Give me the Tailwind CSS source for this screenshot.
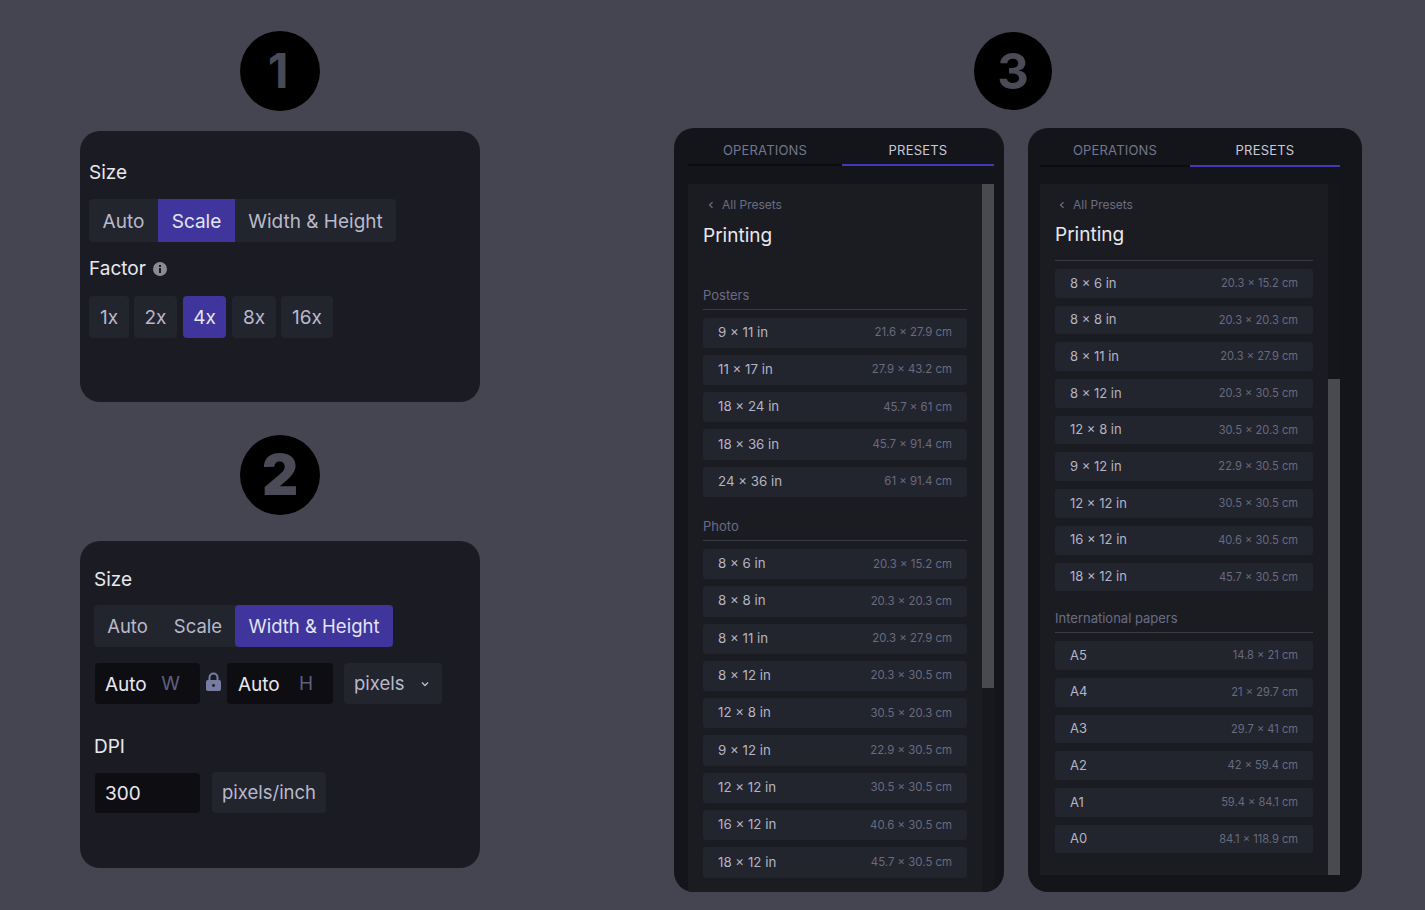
<!DOCTYPE html>
<html lang="en">
<head>
    <meta charset="UTF-8">
    <meta name="viewport" content="width=device-width, initial-scale=1.0">
    <title>Size options</title>
    <script src="https://cdn.jsdelivr.net/npm/@tailwindcss/browser@4"></script>
</head>
<body class="bg-[#444551] h-[910px] overflow-hidden flex font-['Inter',sans-serif]">
    <!-- Left column -->
    <div class="ml-[80px] w-[400px] pt-[31px]">
        <div class="w-[80px] h-[80px] mx-auto rounded-full bg-black flex items-center justify-center pr-[4px] text-[#4a4b57] text-[48px] font-bold leading-none">1</div>

        <!-- Panel 1 -->
        <div class="mt-[20px] h-[271px] rounded-[20px] bg-[#1b1c23] pl-[9px] pt-[30px]">
            <div class="text-[19px] leading-[24px] text-[#e8e8ee]">Size</div>
            <div class="mt-[14px] flex w-fit h-[43px] rounded-[4px] bg-[#22242e] text-[19px] text-[#b9b9cb]">
                <div class="w-[69px] pt-[4px] flex items-center justify-center">Auto</div>
                <div class="w-[77px] pt-[4px] flex items-center justify-center bg-[#3f359c] text-[#e4e4f2]">Scale</div>
                <div class="w-[161px] pt-[4px] flex items-center justify-center">Width &amp; Height</div>
            </div>
            <div class="mt-[15px] flex items-center gap-[7px] text-[19px] leading-[24px] text-[#e8e8ee]">
                Factor
                <svg class="w-[14px] h-[14px]" viewBox="0 0 14 14"><circle cx="7" cy="7" r="7" fill="#8b8b93"/><rect x="6" y="6" width="2" height="5" fill="#1b1c23"/><rect x="6" y="3" width="2" height="2" fill="#1b1c23"/></svg>
            </div>
            <div class="mt-[15px] flex text-[19px] text-[#b9b9cb]">
                <div class="w-[40px] h-[42px] pt-[2px] rounded-[4px] bg-[#22242e] flex items-center justify-center">1x</div>
                <div class="ml-[5px] w-[43px] h-[42px] pt-[2px] rounded-[4px] bg-[#22242e] flex items-center justify-center">2x</div>
                <div class="ml-[6px] w-[43px] h-[42px] pt-[2px] rounded-[4px] bg-[#3f359c] text-[#e4e4f2] flex items-center justify-center">4x</div>
                <div class="ml-[6px] w-[44px] h-[42px] pt-[2px] rounded-[4px] bg-[#22242e] flex items-center justify-center">8x</div>
                <div class="ml-[5px] w-[52px] h-[42px] pt-[2px] rounded-[4px] bg-[#22242e] flex items-center justify-center">16x</div>
            </div>
        </div>

        <div class="mt-[33px] w-[80px] h-[80px] mx-auto rounded-full bg-black flex items-center justify-center text-[#4a4b57] text-[56px] font-black leading-none">2</div>

        <!-- Panel 2 -->
        <div class="mt-[26px] h-[327px] rounded-[20px] bg-[#1b1c23] pl-[14px] pt-[27px]">
            <div class="text-[19px] leading-[24px] text-[#e8e8ee]">Size</div>
            <div class="mt-[13px] flex w-fit h-[42px] rounded-[4px] bg-[#22242e] text-[18.5px] text-[#b9b9cb]">
                <div class="w-[67px] pt-[2px] flex items-center justify-center">Auto</div>
                <div class="w-[74px] pt-[2px] flex items-center justify-center">Scale</div>
                <div class="w-[158px] pt-[2px] flex items-center justify-center rounded-[4px] bg-[#3f359c] text-[#e4e4f2]">Width &amp; Height</div>
            </div>
            <div class="mt-[16px] flex items-center text-[19px]">
                <div class="ml-[1px] w-[105px] h-[41px] rounded-[4px] bg-[#0e0e12] pl-[10px] pr-[20px] pt-[3px] flex items-center justify-between text-[#e8e8ee]">Auto<span class="text-[#5c5f80] -mt-[2px]">W</span></div>
                <svg class="ml-[6px] w-[15px] h-[20px] -mt-[3px]" viewBox="0 0 15 20"><path d="M3.5 9V5.5a4 4 0 0 1 8 0V9" fill="none" stroke="#787ca3" stroke-width="2"/><rect x="0" y="8" width="15" height="11" rx="2" fill="#787ca3"/><circle cx="7.5" cy="13.5" r="1.4" fill="#1b1c23"/></svg>
                <div class="ml-[6px] w-[106px] h-[41px] rounded-[4px] bg-[#0e0e12] pl-[11px] pr-[20px] pt-[3px] flex items-center justify-between text-[#e8e8ee]">Auto<span class="text-[#5c5f80] -mt-[2px]">H</span></div>
                <div class="ml-[11px] w-[98px] h-[41px] rounded-[4px] bg-[#22242e] pl-[10px] pr-[12px] flex items-center justify-between text-[#b9b9cb]">
                    <span class="text-[18.5px]">pixels</span>
                    <svg class="w-[10px] h-[10px]" viewBox="0 0 10 10"><path d="M2 3.5 5 6.5 8 3.5" fill="none" stroke="#b9b9cb" stroke-width="1.4"/></svg>
                </div>
            </div>
            <div class="mt-[31px] text-[19px] leading-[24px] text-[#e8e8ee]">DPI</div>
            <div class="mt-[13px] flex items-center text-[19px]">
                <div class="ml-[1px] w-[105px] h-[40px] rounded-[4px] bg-[#0e0e12] pl-[10px] pt-[3px] flex items-center text-[#e8e8ee]">300</div>
                <div class="ml-[12px] w-[114px] h-[41px] rounded-[4px] bg-[#22242e] flex items-center justify-center text-[18.5px] text-[#b9b9cb]">pixels/inch</div>
            </div>
        </div>
    </div>

    <!-- Right column -->
    <div class="ml-[194px] pt-[32px]">
        <div class="ml-[300px] w-[78px] h-[78px] rounded-full bg-black flex items-center justify-center text-[#4a4b57] text-[49px] font-bold leading-none">3</div>

        <div class="mt-[18px] flex gap-[24px]">
            <!-- Presets, top of list -->
            <div class="w-[330px] h-[764px] rounded-[20px] bg-[#14151a] overflow-hidden pl-[14px]">
                <div class="flex w-[306px] h-[38px] text-[13px] tracking-[0.2px]">
                    <div class="w-[154px] flex items-center justify-center pt-[9px] border-b-2 border-[#0c0c0f] text-[#73758f]">OPERATIONS</div>
                    <div class="w-[152px] flex items-center justify-center pt-[9px] border-b-2 border-[#4338b8] text-[#c9c9d8]">PRESETS</div>
                </div>
                <div class="mt-[18px] flex w-[306px]">
                    <div class="w-[294px] h-[708px] bg-[#1b1c22] pl-[15px] pr-[15px] overflow-hidden">
                        <div class="pt-[14px] flex items-center text-[12px] leading-[14px] text-[#6a6c85]">
                            <svg class="ml-[4px] w-[8px] h-[8px] mr-[7px]" viewBox="0 0 8 8"><path d="M5.5 1.2 2.5 4l3 2.8" fill="none" stroke="#6a6c85" stroke-width="1.2"/></svg>All Presets
                        </div>
                        <div class="mt-[11px] text-[19px] leading-[26px] text-[#e8e8ee]">Printing</div>

                        <div class="mt-[37px] h-[18px] text-[13px] leading-[18px] text-[#6a6c85]">Posters</div>
                        <div class="mt-[5px] border-t border-[#3a3b44] pt-[7.5px] flex flex-col gap-[7px]">
                            <div class="h-[30.3px] rounded-[3px] bg-[#22242e] px-[15px] flex items-center justify-between"><span class="text-[13.3px] text-[#b4b4c4]">9 × 11 in</span><span class="text-[11.4px] text-[#696b80]">21.6 × 27.9 cm</span></div>
                            <div class="h-[30.3px] rounded-[3px] bg-[#22242e] px-[15px] flex items-center justify-between"><span class="text-[13.3px] text-[#b4b4c4]">11 × 17 in</span><span class="text-[11.4px] text-[#696b80]">27.9 × 43.2 cm</span></div>
                            <div class="h-[30.3px] rounded-[3px] bg-[#22242e] px-[15px] flex items-center justify-between"><span class="text-[13.3px] text-[#b4b4c4]">18 × 24 in</span><span class="text-[11.4px] text-[#696b80]">45.7 × 61 cm</span></div>
                            <div class="h-[30.3px] rounded-[3px] bg-[#22242e] px-[15px] flex items-center justify-between"><span class="text-[13.3px] text-[#b4b4c4]">18 × 36 in</span><span class="text-[11.4px] text-[#696b80]">45.7 × 91.4 cm</span></div>
                            <div class="h-[30.3px] rounded-[3px] bg-[#22242e] px-[15px] flex items-center justify-between"><span class="text-[13.3px] text-[#b4b4c4]">24 × 36 in</span><span class="text-[11.4px] text-[#696b80]">61 × 91.4 cm</span></div>
                        </div>

                        <div class="mt-[20px] h-[18px] text-[13px] leading-[18px] text-[#6a6c85]">Photo</div>
                        <div class="mt-[5px] border-t border-[#3a3b44] pt-[8px] flex flex-col gap-[7px]">
                            <div class="h-[30.3px] rounded-[3px] bg-[#22242e] px-[15px] flex items-center justify-between"><span class="text-[13.3px] text-[#b4b4c4]">8 × 6 in</span><span class="text-[11.4px] text-[#696b80]">20.3 × 15.2 cm</span></div>
                            <div class="h-[30.3px] rounded-[3px] bg-[#22242e] px-[15px] flex items-center justify-between"><span class="text-[13.3px] text-[#b4b4c4]">8 × 8 in</span><span class="text-[11.4px] text-[#696b80]">20.3 × 20.3 cm</span></div>
                            <div class="h-[30.3px] rounded-[3px] bg-[#22242e] px-[15px] flex items-center justify-between"><span class="text-[13.3px] text-[#b4b4c4]">8 × 11 in</span><span class="text-[11.4px] text-[#696b80]">20.3 × 27.9 cm</span></div>
                            <div class="h-[30.3px] rounded-[3px] bg-[#22242e] px-[15px] flex items-center justify-between"><span class="text-[13.3px] text-[#b4b4c4]">8 × 12 in</span><span class="text-[11.4px] text-[#696b80]">20.3 × 30.5 cm</span></div>
                            <div class="h-[30.3px] rounded-[3px] bg-[#22242e] px-[15px] flex items-center justify-between"><span class="text-[13.3px] text-[#b4b4c4]">12 × 8 in</span><span class="text-[11.4px] text-[#696b80]">30.5 × 20.3 cm</span></div>
                            <div class="h-[30.3px] rounded-[3px] bg-[#22242e] px-[15px] flex items-center justify-between"><span class="text-[13.3px] text-[#b4b4c4]">9 × 12 in</span><span class="text-[11.4px] text-[#696b80]">22.9 × 30.5 cm</span></div>
                            <div class="h-[30.3px] rounded-[3px] bg-[#22242e] px-[15px] flex items-center justify-between"><span class="text-[13.3px] text-[#b4b4c4]">12 × 12 in</span><span class="text-[11.4px] text-[#696b80]">30.5 × 30.5 cm</span></div>
                            <div class="h-[30.3px] rounded-[3px] bg-[#22242e] px-[15px] flex items-center justify-between"><span class="text-[13.3px] text-[#b4b4c4]">16 × 12 in</span><span class="text-[11.4px] text-[#696b80]">40.6 × 30.5 cm</span></div>
                            <div class="h-[30.3px] rounded-[3px] bg-[#22242e] px-[15px] flex items-center justify-between"><span class="text-[13.3px] text-[#b4b4c4]">18 × 12 in</span><span class="text-[11.4px] text-[#696b80]">45.7 × 30.5 cm</span></div>
                        </div>
                    </div>
                    <div class="w-[12px] h-[708px] bg-[#17181c]">
                        <div class="h-[504px] bg-[#494a4d]"></div>
                    </div>
                </div>
            </div>

            <!-- Presets, scrolled -->
            <div class="w-[334px] h-[764px] rounded-[20px] bg-[#14151a] overflow-hidden pl-[12px]">
                <div class="flex w-[300px] h-[39px] text-[13px] tracking-[0.2px]">
                    <div class="w-[150px] flex items-center justify-center pt-[8px] border-b-2 border-[#0c0c0f] text-[#73758f]">OPERATIONS</div>
                    <div class="w-[150px] flex items-center justify-center pt-[8px] border-b-2 border-[#4338b8] text-[#c9c9d8]">PRESETS</div>
                </div>
                <div class="mt-[17px] flex w-[300px]">
                    <div class="w-[288px] h-[691px] bg-[#1b1c22] pl-[15px] pr-[15px] overflow-hidden">
                        <div class="pt-[14px] flex items-center text-[12px] leading-[14px] text-[#6a6c85]">
                            <svg class="ml-[3px] w-[8px] h-[8px] mr-[7px]" viewBox="0 0 8 8"><path d="M5.5 1.2 2.5 4l3 2.8" fill="none" stroke="#6a6c85" stroke-width="1.2"/></svg>All Presets
                        </div>
                        <div class="mt-[10px] text-[19px] leading-[26px] text-[#e8e8ee]">Printing</div>

                        <div class="mt-[12px] border-t border-[#3a3b44] pt-[8px] flex flex-col gap-[8px]">
                            <div class="h-[28.7px] rounded-[3px] bg-[#22242e] px-[15px] flex items-center justify-between"><span class="text-[13px] text-[#b4b4c4]">8 × 6 in</span><span class="text-[11.1px] text-[#696b80]">20.3 × 15.2 cm</span></div>
                            <div class="h-[28.7px] rounded-[3px] bg-[#22242e] px-[15px] flex items-center justify-between"><span class="text-[13px] text-[#b4b4c4]">8 × 8 in</span><span class="text-[11.1px] text-[#696b80]">20.3 × 20.3 cm</span></div>
                            <div class="h-[28.7px] rounded-[3px] bg-[#22242e] px-[15px] flex items-center justify-between"><span class="text-[13px] text-[#b4b4c4]">8 × 11 in</span><span class="text-[11.1px] text-[#696b80]">20.3 × 27.9 cm</span></div>
                            <div class="h-[28.7px] rounded-[3px] bg-[#22242e] px-[15px] flex items-center justify-between"><span class="text-[13px] text-[#b4b4c4]">8 × 12 in</span><span class="text-[11.1px] text-[#696b80]">20.3 × 30.5 cm</span></div>
                            <div class="h-[28.7px] rounded-[3px] bg-[#22242e] px-[15px] flex items-center justify-between"><span class="text-[13px] text-[#b4b4c4]">12 × 8 in</span><span class="text-[11.1px] text-[#696b80]">30.5 × 20.3 cm</span></div>
                            <div class="h-[28.7px] rounded-[3px] bg-[#22242e] px-[15px] flex items-center justify-between"><span class="text-[13px] text-[#b4b4c4]">9 × 12 in</span><span class="text-[11.1px] text-[#696b80]">22.9 × 30.5 cm</span></div>
                            <div class="h-[28.7px] rounded-[3px] bg-[#22242e] px-[15px] flex items-center justify-between"><span class="text-[13px] text-[#b4b4c4]">12 × 12 in</span><span class="text-[11.1px] text-[#696b80]">30.5 × 30.5 cm</span></div>
                            <div class="h-[28.7px] rounded-[3px] bg-[#22242e] px-[15px] flex items-center justify-between"><span class="text-[13px] text-[#b4b4c4]">16 × 12 in</span><span class="text-[11.1px] text-[#696b80]">40.6 × 30.5 cm</span></div>
                            <div class="h-[28.7px] rounded-[3px] bg-[#22242e] px-[15px] flex items-center justify-between"><span class="text-[13px] text-[#b4b4c4]">18 × 12 in</span><span class="text-[11.1px] text-[#696b80]">45.7 × 30.5 cm</span></div>
                        </div>

                        <div class="mt-[18px] h-[18px] text-[13px] leading-[18px] text-[#6a6c85]">International papers</div>
                        <div class="mt-[5px] border-t border-[#3a3b44] pt-[8px] flex flex-col gap-[8px]">
                            <div class="h-[28.7px] rounded-[3px] bg-[#22242e] px-[15px] flex items-center justify-between"><span class="text-[13px] text-[#b4b4c4]">A5</span><span class="text-[11.1px] text-[#696b80]">14.8 × 21 cm</span></div>
                            <div class="h-[28.7px] rounded-[3px] bg-[#22242e] px-[15px] flex items-center justify-between"><span class="text-[13px] text-[#b4b4c4]">A4</span><span class="text-[11.1px] text-[#696b80]">21 × 29.7 cm</span></div>
                            <div class="h-[28.7px] rounded-[3px] bg-[#22242e] px-[15px] flex items-center justify-between"><span class="text-[13px] text-[#b4b4c4]">A3</span><span class="text-[11.1px] text-[#696b80]">29.7 × 41 cm</span></div>
                            <div class="h-[28.7px] rounded-[3px] bg-[#22242e] px-[15px] flex items-center justify-between"><span class="text-[13px] text-[#b4b4c4]">A2</span><span class="text-[11.1px] text-[#696b80]">42 × 59.4 cm</span></div>
                            <div class="h-[28.7px] rounded-[3px] bg-[#22242e] px-[15px] flex items-center justify-between"><span class="text-[13px] text-[#b4b4c4]">A1</span><span class="text-[11.1px] text-[#696b80]">59.4 × 84.1 cm</span></div>
                            <div class="h-[28.7px] rounded-[3px] bg-[#22242e] px-[15px] flex items-center justify-between"><span class="text-[13px] text-[#b4b4c4]">A0</span><span class="text-[11.1px] text-[#696b80]">84.1 × 118.9 cm</span></div>
                        </div>
                    </div>
                    <div class="w-[12px] h-[691px] pt-[195px] bg-[#15161b]">
                        <div class="h-[496px] bg-[#494a4d]"></div>
                    </div>
                </div>
            </div>
        </div>
    </div>
</body>
</html>
